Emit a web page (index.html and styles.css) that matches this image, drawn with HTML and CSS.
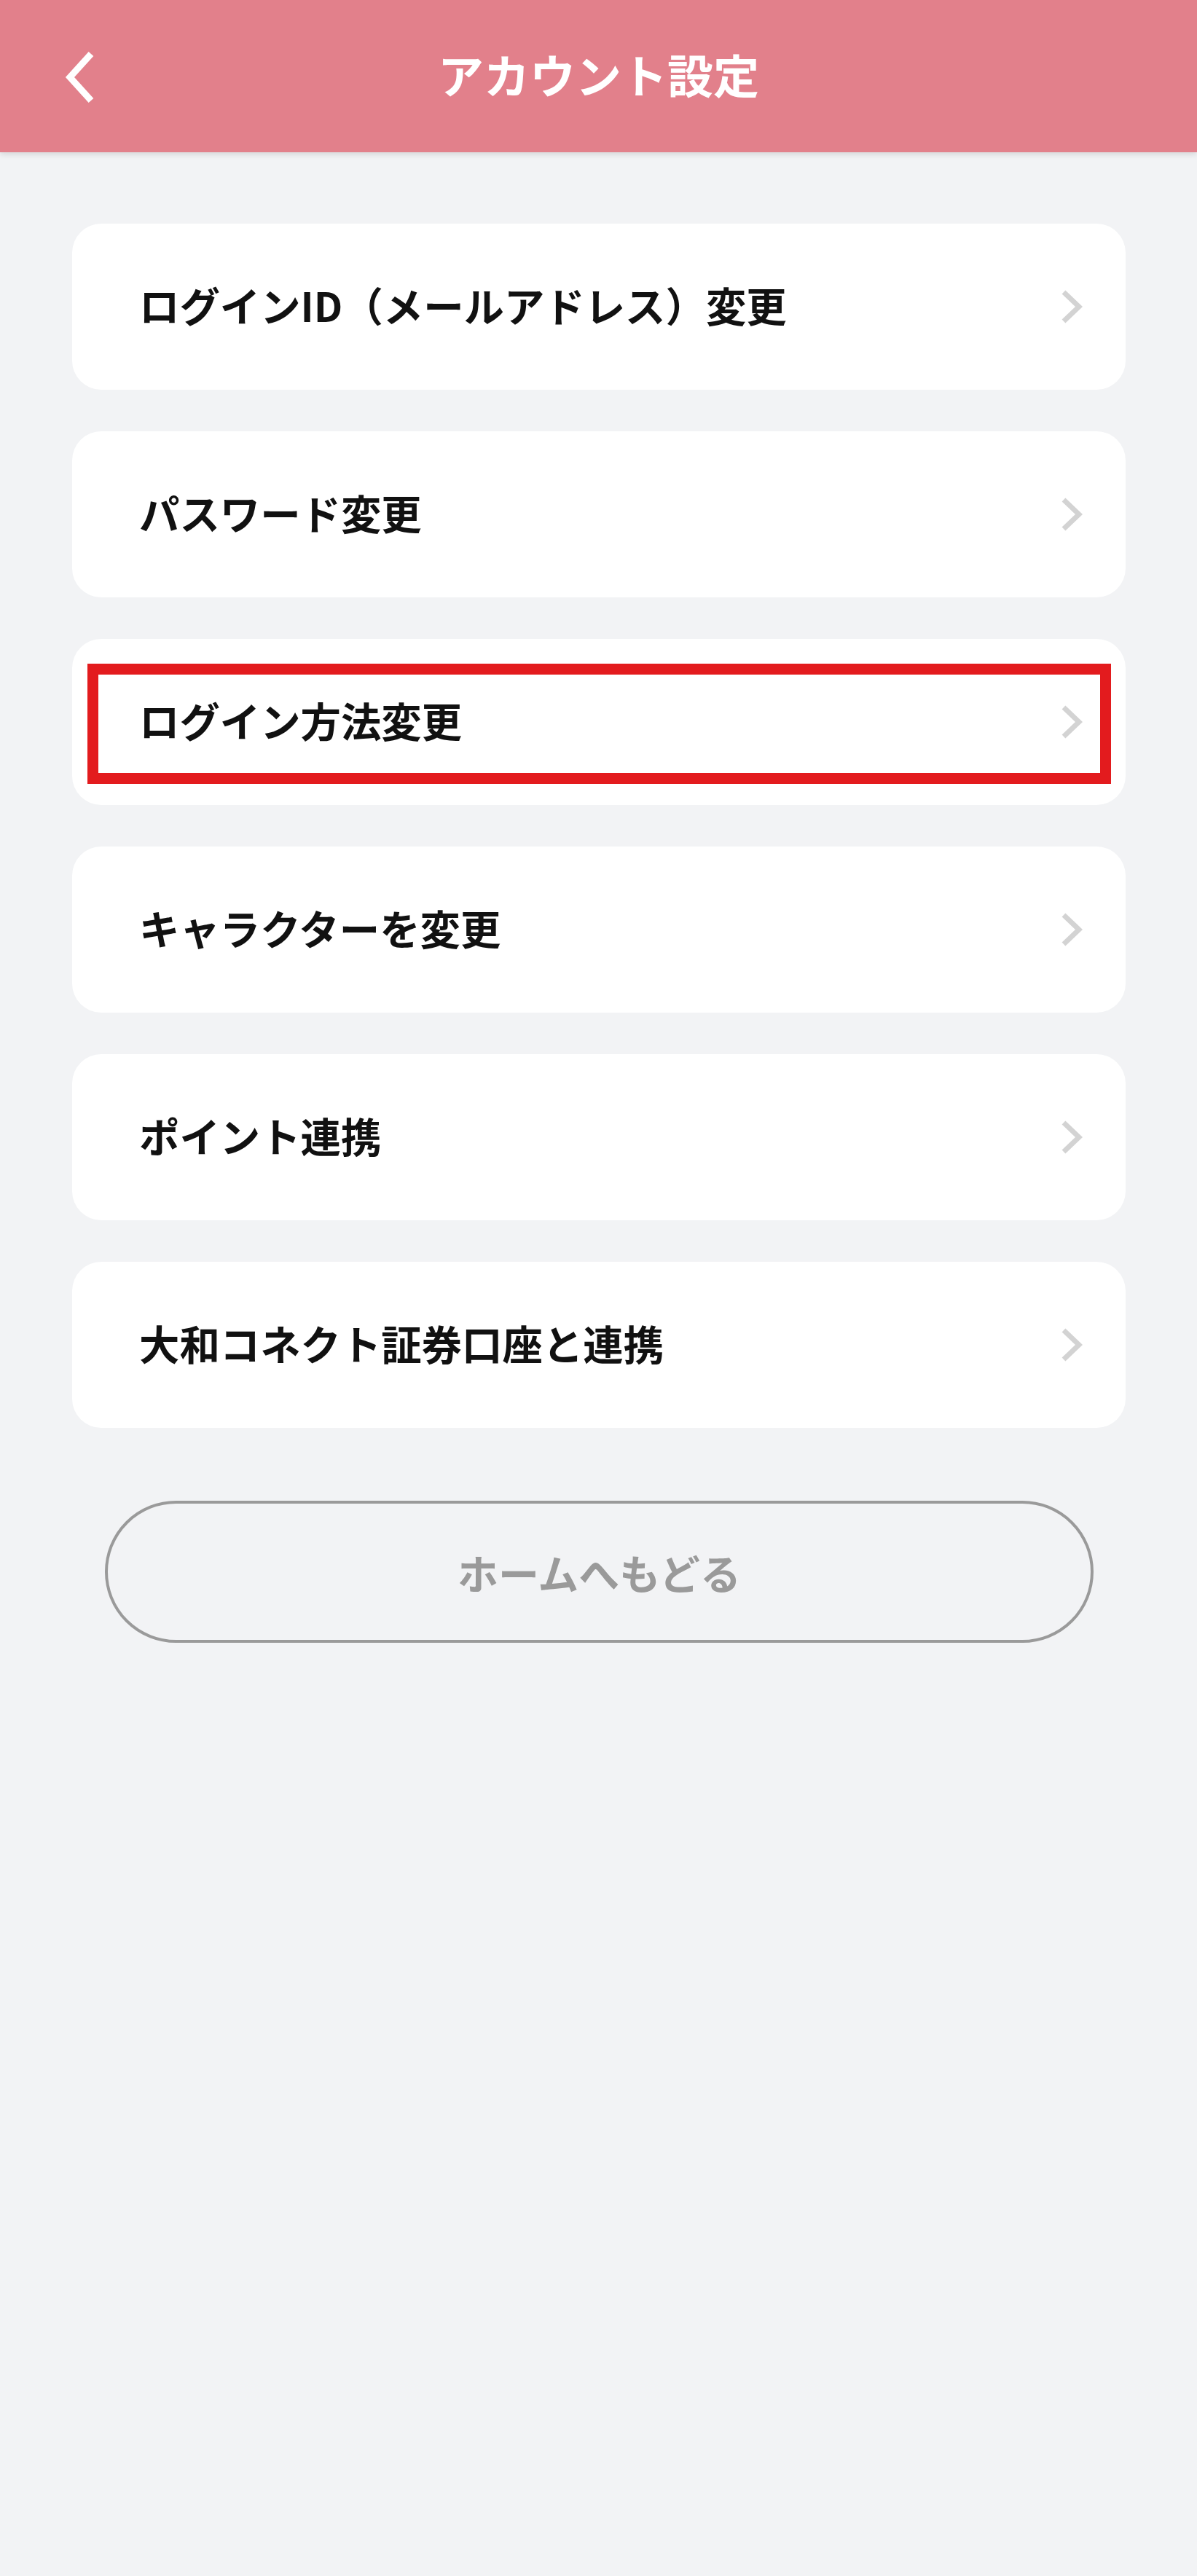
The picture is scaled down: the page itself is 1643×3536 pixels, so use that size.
FILE: index.html
```html
<!DOCTYPE html>
<html lang="ja">

<head>
    <meta charset="UTF-8">
    <meta name="viewport" content="width=device-width, initial-scale=1.0">
    <title>アカウント設定</title>

    <link rel="stylesheet" href="styles.css">
</head>

<body>
    <header class="header">
        <a class="back" href="#">
            <svg width="42" height="72" viewBox="0 0 42 72">
                <polyline points="36,4 7,36 36,68" fill="none" stroke="#fff" stroke-width="9" />
            </svg>
        </a>
        <h1 class="title">アカウント設定</h1>
        <span></span>
    </header>

    <div class="container">
        <ul class="menu">
            <li class="item"><span>ログインID（メールアドレス）変更</span><i class="arrow"></i></li>
            <li class="item"><span>パスワード変更</span><i class="arrow"></i></li>
            <li class="item marked"><span>ログイン方法変更</span><i class="arrow"></i></li>
            <li class="item"><span>キャラクターを変更</span><i class="arrow"></i></li>
            <li class="item"><span>ポイント連携</span><i class="arrow"></i></li>
            <li class="item"><span>大和コネクト証券口座と連携</span><i class="arrow"></i></li>
        </ul>
        <button class="home">ホームへもどる</button>
    </div>
</body>

</html>
```

FILE: styles.css
```css
* {
    box-sizing: border-box;
}

body {
    margin: 0;
    min-height: 3536px;
    background-color: #f2f3f5;
    font-family: "Noto Sans CJK JP", "Noto Sans", sans-serif;
    font-weight: 700;
}

.header {
    display: grid;
    grid-template-columns: 1fr auto 1fr;
    align-items: center;
    height: 209px;
    background-color: #e2808b;
    box-shadow: 0 3px 8px rgba(0, 0, 0, .12);
}

.back {
    display: flex;
    padding-left: 89px;
    padding-top: 2px;
}

.title {
    margin: 0;
    color: #fff;
    font-size: 63px;
    font-weight: 700;
    line-height: 1;
    padding-bottom: 8px;
}

.container {
    padding: 98px 98px 0 99px;
}

.menu {
    display: flex;
    flex-direction: column;
    gap: 57px;
    margin: 0;
    padding: 0;
    list-style: none;
}

.item {
    position: relative;
    display: flex;
    align-items: center;
    justify-content: space-between;
    height: 228px;
    padding: 0 59px 0 92px;
    border-radius: 40px;
    background-color: #fff;
    color: #111;
    font-size: 55.4px;
    line-height: 1;
    cursor: pointer;
}

.item span {
    padding-bottom: 4px;
}

.arrow {
    width: 30px;
    height: 48px;
    background: url("data:image/svg+xml,%3Csvg xmlns='http://www.w3.org/2000/svg' width='30' height='48' viewBox='0 0 30 48'%3E%3Cpolyline points='4,4 25,24 4,44' fill='none' stroke='%23d3d3d3' stroke-width='7'/%3E%3C/svg%3E") no-repeat center;
}

/* 注目枠 */
.marked::after {
    content: "";
    position: absolute;
    top: 34px;
    left: 21px;
    right: 20px;
    bottom: 29px;
    border: 15px solid #e31b1e;
}

.home {
    display: block;
    width: 1357px;
    height: 195px;
    margin: 100px 0 0 45px;
    border: 4px solid #9a9a9a;
    border-radius: 98px;
    background-color: transparent;
    color: #9a9a9a;
    font-family: inherit;
    font-size: 56px;
    font-weight: 700;
    cursor: pointer;
}
```
